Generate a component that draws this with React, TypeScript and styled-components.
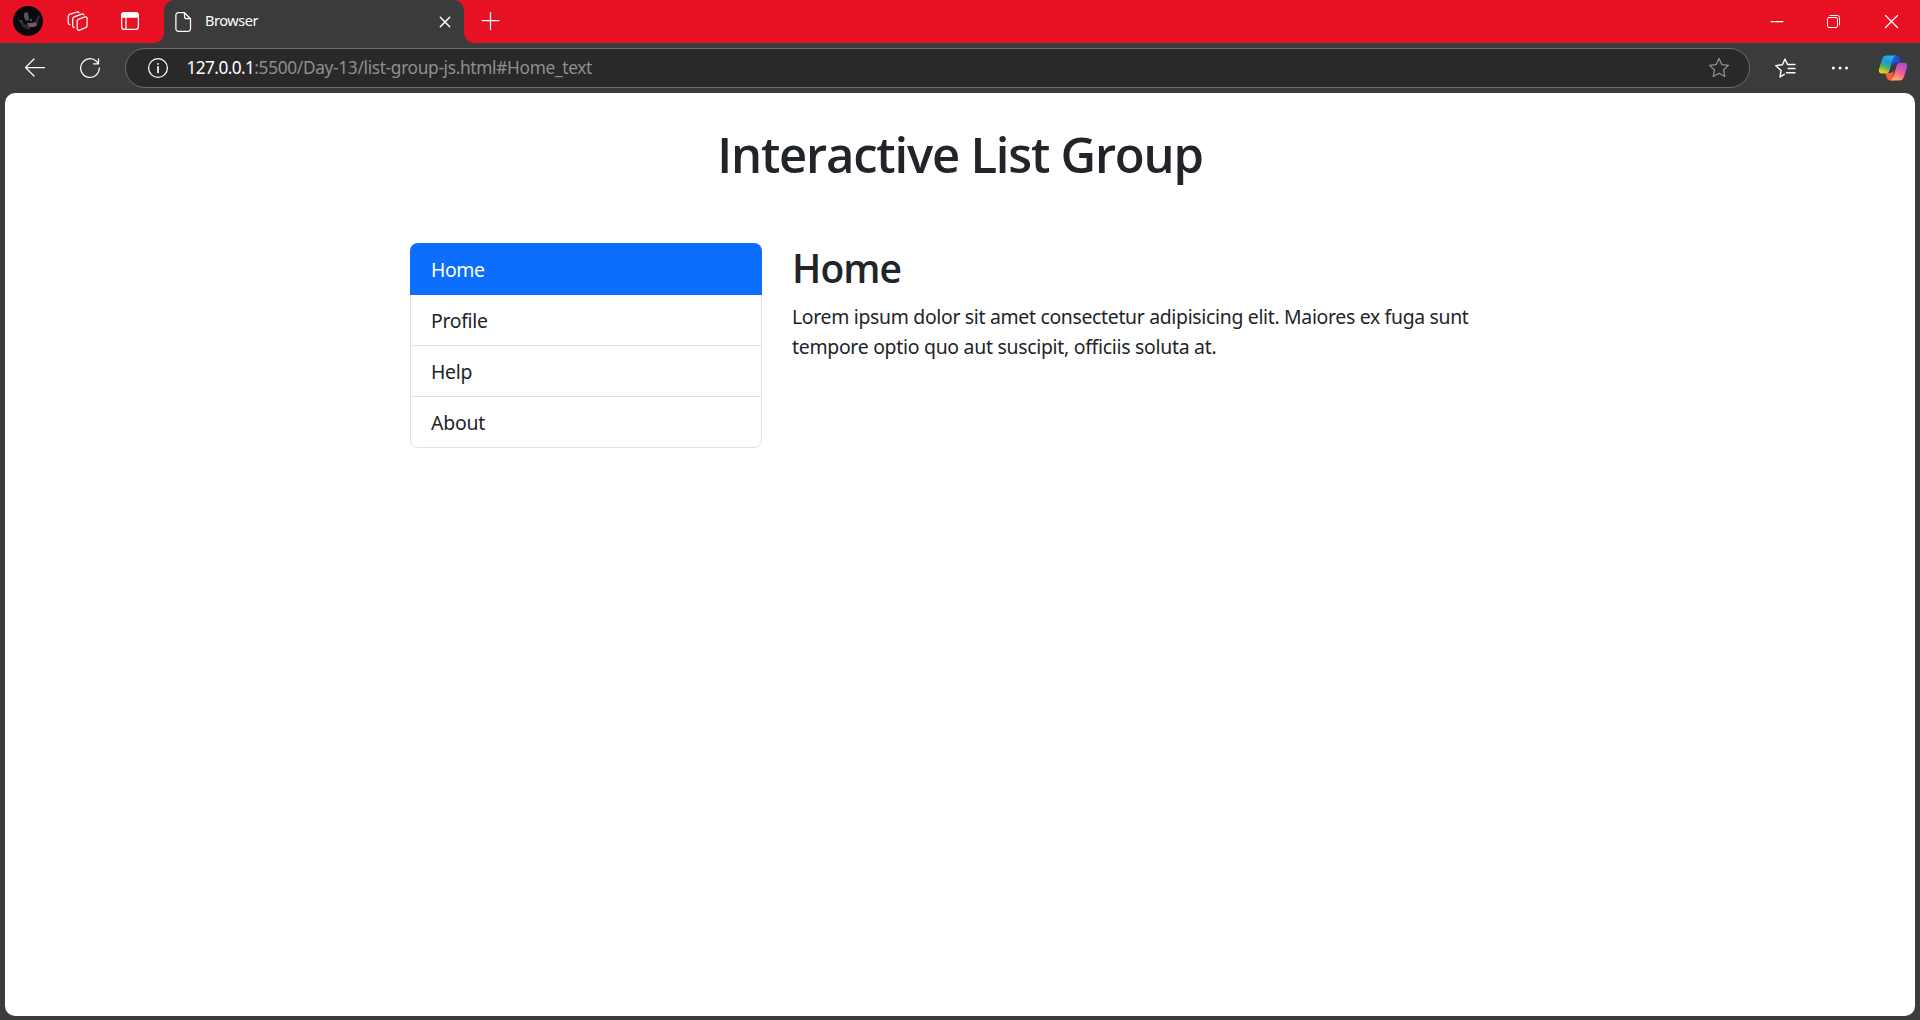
import React, { useState } from "react";
import styled, { createGlobalStyle } from "styled-components";

const GlobalStyle = createGlobalStyle`
  *, *::before, *::after { box-sizing: border-box; }
  body {
    margin: 0;
    background: #3b3b3b;
    color: #212529;
    font-family: "Segoe UI", "Noto Sans", "Open Sans", sans-serif;
    overflow: hidden;
  }
`;

const Window = styled.div`
  display: flex;
  flex-direction: column;
  width: 100%;
  height: 1020px;
  background: #3b3b3b;
`;

const TitleBar = styled.header`
  display: flex;
  height: 43px;
  background: #3b3b3b;
  color: #fff;
`;

const LeftStrip = styled.div`
  display: flex;
  align-items: flex-start;
  width: 164px;
  padding: 6px 0 0 13px;
  background: #e81123;
  border-bottom-right-radius: 10px;
`;

const Avatar = styled.svg`
  width: 30px;
  height: 30px;
`;

const Icon = styled.svg<{ $w?: number; $l?: number; $t?: number; $r?: number; $stroke?: number }>`
  display: block;
  flex: none;
  width: ${(p) => p.$w ?? 24}px;
  height: ${(p) => p.$w ?? 24}px;
  margin-left: ${(p) => p.$l ?? 0}px;
  margin-right: ${(p) => p.$r ?? 0}px;
  margin-top: ${(p) => p.$t ?? 0}px;
  fill: none;
  stroke: ${(p) => (p.$stroke === 0 ? "none" : "currentColor")};
  stroke-width: ${(p) => p.$stroke ?? 1.25};
  stroke-linecap: round;
  stroke-linejoin: round;
`;

const TabShell = styled.div`
  width: 300px;
  background: #e81123;
`;

const Tab = styled.div`
  display: flex;
  align-items: flex-start;
  height: 43px;
  padding-left: 7px;
  padding-top: 10px;
  background: #3b3b3b;
  border-radius: 10px 10px 0 0;
`;

const TabTitle = styled.span`
  flex: 1;
  margin-left: 10px;
  font-size: 14.5px;
  line-height: 20px;
  letter-spacing: -0.42px;
`;

const RightStrip = styled.div`
  display: flex;
  flex: 1;
  align-items: flex-start;
  padding: 9px 16px 0 14px;
  background: #e81123;
  border-bottom-left-radius: 10px;
`;

const Spacer = styled.div`
  flex: 1;
`;

const Toolbar = styled.div`
  display: flex;
  height: 50px;
  padding: 5px 8px 0 23px;
  color: #fff;
`;

const AddressBar = styled.div`
  display: flex;
  flex: none;
  width: 1625px;
  height: 40px;
  margin-left: 23px;
  padding: 0 18px 0 20px;
  background: #292929;
  border: 1px solid #6c6c6c;
  border-radius: 20px;
`;

const Url = styled.div`
  flex: 1;
  margin-left: 16.5px;
  font-size: 17.3px;
  line-height: 37px;
  letter-spacing: -0.33px;
  color: #8f8f8f;
  white-space: nowrap;
`;

const Host = styled.span`
  color: #fff;
  letter-spacing: -0.6px;
`;

const Muted = styled.span`
  color: #949494;
`;

const Page = styled.main`
  flex: none;
  width: 1910px;
  height: 923px;
  margin-left: 5px;
  padding-top: 31px;
  background: #fff;
  border-radius: 10px;
`;

const Title = styled.h1`
  margin: 0 0 59px;
  font-family: "Segoe UI", "Open Sans", sans-serif;
  font-size: 49px;
  line-height: 60px;
  font-weight: 600;
  letter-spacing: -1.22px;
  text-align: center;
`;

const Row = styled.div`
  display: flex;
  gap: 30px;
  padding-left: 405px;
`;

const ListGroup = styled.nav`
  display: flex;
  flex-direction: column;
  width: 352px;
  height: 205px;
  border: 1px solid #dee2e6;
  border-radius: 8px;
`;

const ListItem = styled.button<{ $active: boolean; $spacing: number }>`
  flex: none;
  display: block;
  height: ${(p) => (p.$active ? 52 : 51)}px;
  margin: ${(p) => (p.$active ? "-1px -1px 0" : "0")};
  padding: ${(p) => (p.$active ? "1px 21px 0" : "1px 20px 0")};
  border: 0;
  border-bottom: ${(p) => (p.$active ? "0" : "1px solid #dee2e6")};
  border-radius: ${(p) => (p.$active ? "8px 8px 0 0" : "0")};
  background: ${(p) => (p.$active ? "#0d6efd" : "transparent")};
  color: ${(p) => (p.$active ? "#fff" : "#212529")};
  font-family: inherit;
  font-size: 19.4px;
  line-height: 50px;
  letter-spacing: ${(p) => p.$spacing}px;
  text-align: left;
  cursor: pointer;

  &:last-child { border-bottom: 0; }
`;

const Content = styled.section`
  width: 740px;
`;

const SectionTitle = styled.h2`
  margin: 1px 0 10px;
  font-family: "Segoe UI", "Open Sans", sans-serif;
  font-size: 39px;
  line-height: 48px;
  font-weight: 600;
  letter-spacing: -0.9px;
`;

const Paragraph = styled.p`
  margin: 0;
  font-size: 19.4px;
  line-height: 30px;
`;

const Line = styled.span<{ $spacing: number }>`
  display: block;
  white-space: nowrap;
  letter-spacing: ${(p) => p.$spacing}px;
`;

const items = [
  { name: "Home", spacing: -0.4 },
  { name: "Profile", spacing: -0.3 },
  { name: "Help", spacing: -0.3 },
  { name: "About", spacing: -0.2 },
];

const STAR =
  "M12 2.6l2.8 6 6.6.8-4.9 4.5 1.3 6.6-5.8-3.3-5.8 3.3 1.3-6.6-4.9-4.5 6.6-.8z";

function Copilot() {
  return (
    <Icon $w={30} $l={26} $t={5} $stroke={0} viewBox="0 0 30 30">
      <defs>
        <linearGradient id="cpA" x1="0.6" y1="0" x2="0.25" y2="1">
          <stop offset="0" stopColor="#22b5f2" />
          <stop offset="0.35" stopColor="#2193d8" />
          <stop offset="0.65" stopColor="#4bb56a" />
          <stop offset="0.95" stopColor="#f2cb10" />
        </linearGradient>
        <linearGradient id="cpB" x1="0.8" y1="0" x2="0.3" y2="1">
          <stop offset="0" stopColor="#a24be0" />
          <stop offset="0.5" stopColor="#ec5a9a" />
          <stop offset="1" stopColor="#ffb066" />
        </linearGradient>
        <linearGradient id="cpC" x1="0" y1="0" x2="1" y2="0.5">
          <stop offset="0" stopColor="#1e62df" />
          <stop offset="1" stopColor="#1746c9" />
        </linearGradient>
      </defs>
      <path d="M15 2.500h3.500c1.600 0 2.400.9 2.900 2.600l1.300 4.700h-3c-2.600 0-4 .8-5 3.200z" fill="url(#cpC)" />
      <path d="M15 27.500h-2.500c-2.300 0-3.200-1-3.800-3l-1.400-4.400h3.200c2.600 0 4.200-1 5-3.200z" fill="#f4613c" />
      <path d="M8.600 2.500h9.300c-1.700.3-2.400 1.600-3 3.500l-3.500 11.500c-.6 2-1.700 2.900-3.600 2.900H3.900c-2.500 0-3.600-2-2.900-4.500l3-9.400c.8-2.600 2.300-4 4.600-4z" fill="url(#cpA)" />
      <path d="M21.500 27.500h-9.300c1.700-.3 2.500-1.600 3-3.500l3.500-11.300c.6-2 1.700-3 3.600-3h3.900c2.500 0 3.500 2.100 2.800 4.500l-2.900 9.300c-.8 2.600-2.300 4-4.600 4z" fill="url(#cpB)" />
    </Icon>
  );
}

export default function App() {
  const [active, setActive] = useState("Home");

  return (
    <Window>
      <GlobalStyle />
      <TitleBar>
        <LeftStrip>
          <Avatar viewBox="0 0 30 30">
            <circle cx="15" cy="15" r="15" fill="#08090c" />
            <path d="M11 7l4-1 1 8-3 1-2-4z" fill="#55535c" />
            <path d="M5 14l4 0 2 4 5 1 6-3 3-7 2 1-3 9-6 1-2 4-6-3z" fill="#31282d" />
            <path d="M14 17l5 0 4-1 1 4-4 1-4 0z" fill="#725960" />
            <path d="M17 14l2 0M8 15l1 0" stroke="#357f8c" strokeWidth="1.300" />
          </Avatar>
          <Icon $l={23} $t={3} viewBox="0 0 24 24">
            <path d="M12.300 10.300l6.600-2.400c1.300-.4 2.200.2 2.200 1.400v7.200c0 1-.5 1.700-1.500 2.100l-6.200 2.500c-1.300.5-2.200-.1-2.200-1.300v-7.500c0-1 .3-1.700 1.100-2z" />
            <path d="M8.200 18.600c-1-.2-1.500-.8-1.500-1.900V10c0-1 .5-1.700 1.500-2.100l7.400-2.800c1.200-.4 2 0 2.200.8" />
            <path d="M4 15.800c-1.200-.3-1.800-1-1.800-2.200V7.400c0-1 .5-1.700 1.500-2.100L10.600 3c1.100-.3 1.900-.1 2.300.6" />
          </Icon>
          <Icon $l={28} $t={3} viewBox="0 0 24 24">
            <rect x="3.600" y="3.700" width="16.800" height="16.700" rx="3" />
            <path d="M3.600 8V6.700a3 3 0 0 1 3-3h10.800a3 3 0 0 1 3 3V8z" fill="currentColor" />
            <path d="M8 8v12" />
          </Icon>
        </LeftStrip>
        <TabShell>
          <Tab>
            <Icon viewBox="0 0 24 24">
              <path d="M13.500 2.700H7.200a2.300 2.300 0 0 0-2.300 2.300v14a2.300 2.300 0 0 0 2.300 2.300h10a2.300 2.300 0 0 0 2.300-2.300V8.700zM13.500 2.700v3.700a2.300 2.300 0 0 0 2.300 2.300h3.700" />
            </Icon>
            <TabTitle>Browser</TabTitle>
            <Icon $w={12} $t={6} $r={13.5} $stroke={1.5} viewBox="0 0 12 12">
              <path d="M1.300 1.300l9.400 9.400M10.700 1.300l-9.400 9.400" />
            </Icon>
          </Tab>
        </TabShell>
        <RightStrip>
          <Icon viewBox="0 0 24 24">
            <path d="M12.500 3.500v17M4 11.500h17" />
          </Icon>
          <Spacer />
          <Icon viewBox="0 0 24 24">
            <path d="M6 12.500h12" />
          </Icon>
          <Icon $l={33} $stroke={1} viewBox="0 0 24 24">
            <rect x="5.500" y="8.500" width="10" height="10" rx="1.500" />
            <path d="M8 6.500h7.500a2 2 0 0 1 2 2V16" />
          </Icon>
          <Icon $l={34} viewBox="0 0 24 24">
            <path d="M5.500 6.500l12 12M17.500 6.500l-12 12" />
          </Icon>
        </RightStrip>
      </TitleBar>

      <Toolbar>
        <Icon $t={7} viewBox="0 0 24 24">
          <path d="M21.500 12.500H2.500M11 4l-8.500 8.500L11 21" />
        </Icon>
        <Icon $l={31} $t={8} viewBox="0 0 24 24">
          <path d="M21.300 12a9.300 9.300 0 1 1-2.800-6.600l1.800 1.800M20.500 2.800v5h-5" />
        </Icon>
        <AddressBar>
          <Icon $t={7} viewBox="0 0 24 24">
            <circle cx="12" cy="12" r="9.400" />
            <path d="M12 10.800v5.700M12 7.800v.1" strokeWidth="1.7" />
          </Icon>
          <Url>
            <Host>127.0.0.1</Host>:5500/Day-13/list-group-js.html#Home_text
          </Url>
          <Muted>
            <Icon $t={7} viewBox="0 0 24 24">
              <path d={STAR} />
            </Icon>
          </Muted>
        </AddressBar>
        <Icon $l={23} $t={8} $stroke={1.4} viewBox="0 0 24 24">
          <path d="M11.300 18.300L7 20.900l1.100-6.400L2.700 9.600l6.700-.9L12 3.100l2.600 5.400h7.400M15.200 12.500h6.800M13.500 16.700h8.500" />
        </Icon>
        <Icon $l={31} $t={8} viewBox="0 0 24 24">
          <path d="M5.300 12h.1M12 12h.1M18.500 12h.1" strokeWidth="3" />
        </Icon>
        <Copilot />
      </Toolbar>

      <Page>
        <Title>Interactive List Group</Title>
        <Row>
          <ListGroup>
            {items.map((item) => (
              <ListItem
                key={item.name}
                $active={item.name === active}
                $spacing={item.spacing}
                onClick={() => setActive(item.name)}
              >
                {item.name}
              </ListItem>
            ))}
          </ListGroup>
          <Content>
            <SectionTitle>{active}</SectionTitle>
            <Paragraph>
              <Line $spacing={-0.31}>
                Lorem ipsum dolor sit amet consectetur adipisicing elit. Maiores ex fuga sunt
              </Line>
              <Line $spacing={-0.27}>tempore optio quo aut suscipit, officiis soluta at.</Line>
            </Paragraph>
          </Content>
        </Row>
      </Page>
    </Window>
  );
}
